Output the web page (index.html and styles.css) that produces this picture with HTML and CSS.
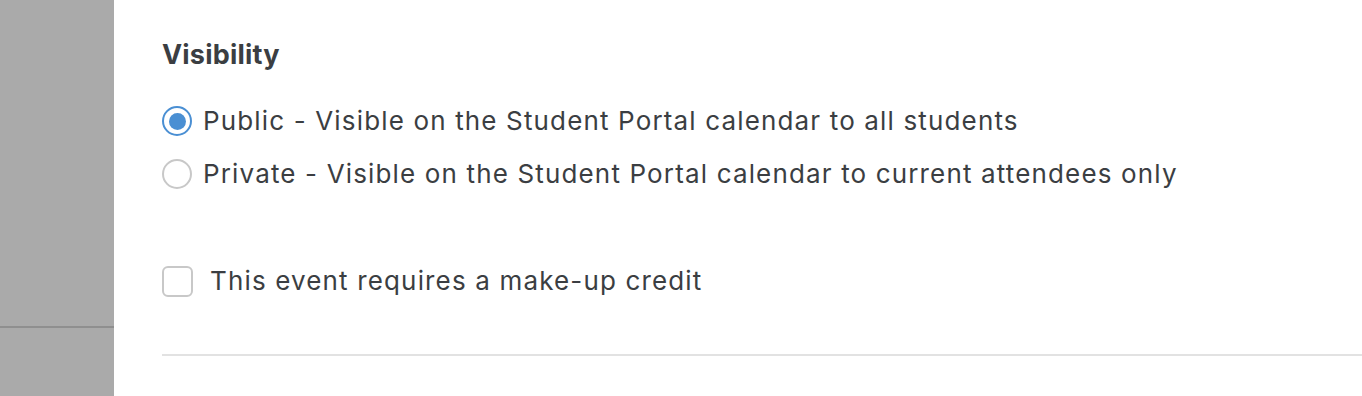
FILE: index.html
```html
<!DOCTYPE html>
<html lang="en">
<head>
    <meta charset="UTF-8">
    <meta name="viewport" content="width=device-width, initial-scale=1.0">
    <title>Event settings</title>
    <link rel="stylesheet" href="styles.css">
</head>
<body>
    <!-- left side panel (dimmed) -->
    <div class="side-panel">
        <div class="side-line"></div>
    </div>

    <!-- main form -->
    <div class="main">
        <h2 class="section-title">Visibility</h2>

        <div class="radio-group">
            <label class="radio-row">
                <input type="radio" name="visibility" checked>
                <span class="radio-mark"></span>
                <span class="radio-text">Public - Visible on the Student Portal calendar to all students</span>
            </label>
            <label class="radio-row">
                <input type="radio" name="visibility">
                <span class="radio-mark"></span>
                <span class="radio-text">Private - Visible on the Student Portal calendar to current attendees only</span>
            </label>
        </div>

        <label class="check-row">
            <input type="checkbox">
            <span class="check-mark"></span>
            <span class="check-text">This event requires a make-up credit</span>
        </label>

        <hr class="divider">
    </div>
</body>
</html>
```

FILE: styles.css
```css
/* page */
body {
    margin: 0;
    display: flex;
    height: 396px;
    overflow: hidden;
    font-family: Inter, "Noto Sans", sans-serif;
    color: #3b3e42;
    background-color: #fff;
}

/* dimmed side panel */
.side-panel {
    width: 114px;
    flex-shrink: 0;
    background-color: #aaaaaa;
    padding-top: 326px;
    box-sizing: border-box;
}

.side-line {
    height: 2px;
    background-color: #8f8f8f;
}

/* form area */
.main {
    flex: 1;
    padding: 37px 0 0 48px;
}

.section-title {
    margin: 0 0 30px;
    font-size: 27px;
    font-weight: 700;
    line-height: 36px;
    letter-spacing: 0.2px;
}

/* radio buttons */
.radio-group {
    display: flex;
    flex-direction: column;
    gap: 17px;
}

.radio-row,
.check-row {
    display: flex;
    align-items: center;
    cursor: pointer;
    font-size: 26px;
    line-height: 36px;
    letter-spacing: 1.15px;
}

.radio-row input,
.check-row input {
    display: none;
}

.radio-mark {
    width: 30px;
    height: 30px;
    border: 2px solid #c8c8c8;
    border-radius: 50%;
    box-sizing: border-box;
    margin-right: 11px;
    display: flex;
    align-items: center;
    justify-content: center;
}

.radio-row input:checked + .radio-mark {
    border-color: #4a8fd3;
}

.radio-row input:checked + .radio-mark::after {
    content: "";
    width: 17px;
    height: 17px;
    border-radius: 50%;
    background-color: #4a8fd3;
}

/* checkbox */
.check-row {
    margin-top: 71px;
}

.check-mark {
    width: 31px;
    height: 31px;
    border: 2px solid #c8c8c8;
    border-radius: 6px;
    box-sizing: border-box;
    margin-right: 17px;
}

.divider {
    margin: 55px 0 0;
    border: none;
    height: 2px;
    background-color: #e2e2e2;
}
```
